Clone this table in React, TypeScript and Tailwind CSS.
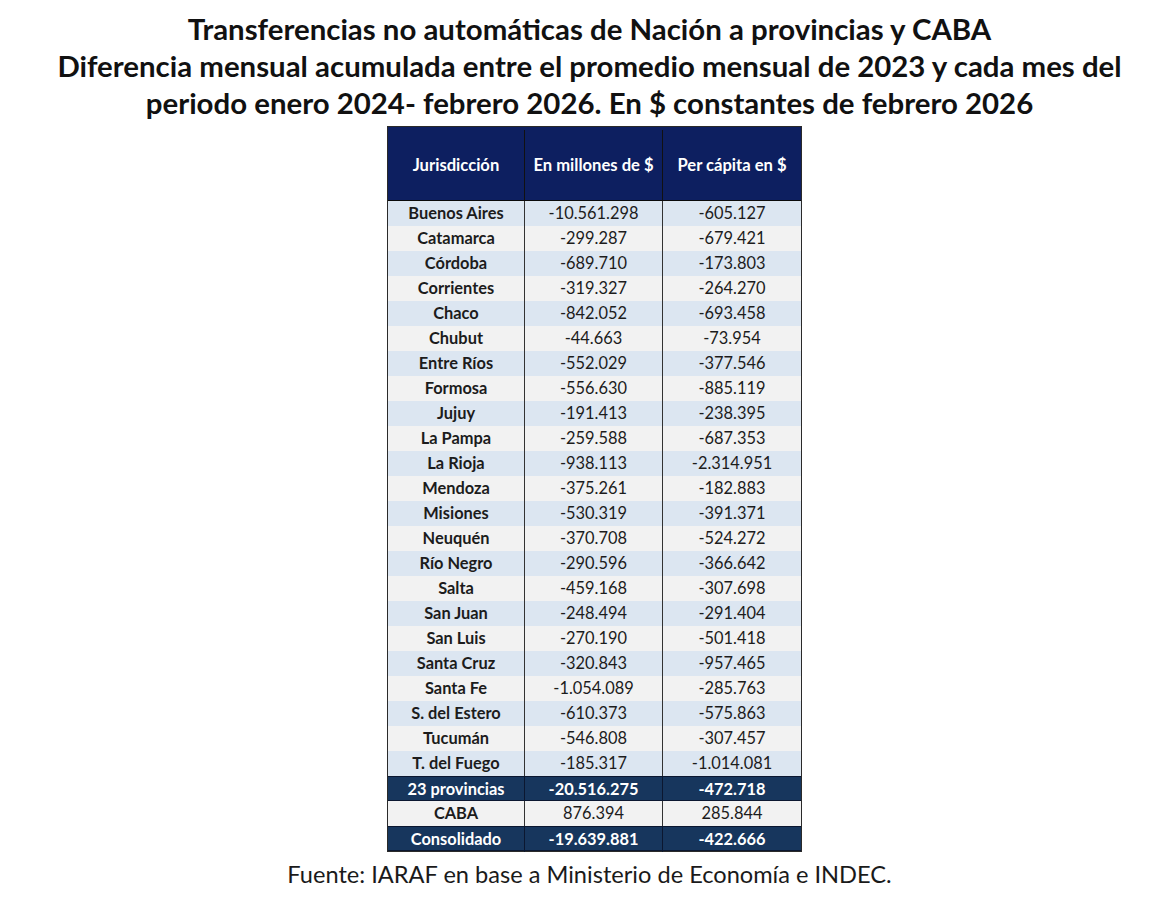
const ROWS: [string, string, string][] = [
  ['Buenos Aires', '-10.561.298', '-605.127'],
  ['Catamarca', '-299.287', '-679.421'],
  ['Córdoba', '-689.710', '-173.803'],
  ['Corrientes', '-319.327', '-264.270'],
  ['Chaco', '-842.052', '-693.458'],
  ['Chubut', '-44.663', '-73.954'],
  ['Entre Ríos', '-552.029', '-377.546'],
  ['Formosa', '-556.630', '-885.119'],
  ['Jujuy', '-191.413', '-238.395'],
  ['La Pampa', '-259.588', '-687.353'],
  ['La Rioja', '-938.113', '-2.314.951'],
  ['Mendoza', '-375.261', '-182.883'],
  ['Misiones', '-530.319', '-391.371'],
  ['Neuquén', '-370.708', '-524.272'],
  ['Río Negro', '-290.596', '-366.642'],
  ['Salta', '-459.168', '-307.698'],
  ['San Juan', '-248.494', '-291.404'],
  ['San Luis', '-270.190', '-501.418'],
  ['Santa Cruz', '-320.843', '-957.465'],
  ['Santa Fe', '-1.054.089', '-285.763'],
  ['S. del Estero', '-610.373', '-575.863'],
  ['Tucumán', '-546.808', '-307.457'],
  ['T. del Fuego', '-185.317', '-1.014.081'],
];

const GRID = 'grid grid-cols-[137px_138px_138px]';

function TotalRow({ cells }: { cells: [string, string, string] }) {
  return (
    <div className={`${GRID} h-[25px] bg-[#17365d] text-white font-bold border-y border-[#0b1730]`}>
      {cells.map((c, i) => (
        <div
          key={i}
          className={`flex items-center justify-center ${i < 2 ? 'border-r border-[#0b1730]' : ''}`}
        >
          {c}
        </div>
      ))}
    </div>
  );
}

export default function App() {
  return (
    <div
      className="w-[1155px] h-[905px] bg-white flex flex-col items-center pl-[24px]"
      style={{ fontFamily: 'Lato, "Open Sans", Arial, sans-serif' }}
    >
      {/* Title */}
      <h1 className="pt-[10px] text-center text-[29.4px] leading-[37px] font-bold text-[#111] whitespace-nowrap">
        Transferencias no automáticas de Nación a provincias y CABA
        <br />
        Diferencia mensual acumulada entre el promedio mensual de 2023 y cada mes del
        <br />
        periodo enero 2024- febrero 2026. En $ constantes de febrero 2026
      </h1>

      {/* Table */}
      <div className="mt-[5px] ml-[10px] w-[415px] border border-[#2a2a2a] text-[16.4px] text-[#1c1c1c]">
        <div className={`${GRID} h-[74px] pt-[3px] bg-[#0d1f60] text-white text-[16.6px] font-bold border-b border-[#0a0a0a]`}>
          <div className="flex items-center justify-center border-r border-[#111]">Jurisdicción</div>
          <div className="flex items-center justify-center border-r border-[#111]">En millones de $</div>
          <div className="flex items-center justify-center">Per cápita en $</div>
        </div>

        {ROWS.map(([name, mill, cap], idx) => (
          <div
            key={name}
            className={`${GRID} h-[25px] ${idx % 2 === 0 ? 'bg-[#dce6f1]' : 'bg-[#f2f2f2]'}`}
          >
            <div className="flex items-center justify-center font-bold border-r border-[#333]">{name}</div>
            <div className="flex items-center justify-center border-r border-[#333]">{mill}</div>
            <div className="flex items-center justify-center">{cap}</div>
          </div>
        ))}

        <TotalRow cells={['23 provincias', '-20.516.275', '-472.718']} />
        <div className={`${GRID} h-[25px] bg-[#f2f2f2]`}>
          <div className="flex items-center justify-center font-bold border-r border-[#333]">CABA</div>
          <div className="flex items-center justify-center border-r border-[#333]">876.394</div>
          <div className="flex items-center justify-center">285.844</div>
        </div>
        <TotalRow cells={['Consolidado', '-19.639.881', '-422.666']} />
      </div>

      {/* Source */}
      <p className="mt-[7px] text-[23.6px] leading-[30px] text-[#1a1a1a]">
        Fuente: IARAF en base a Ministerio de Economía e INDEC.
      </p>
    </div>
  );
}
